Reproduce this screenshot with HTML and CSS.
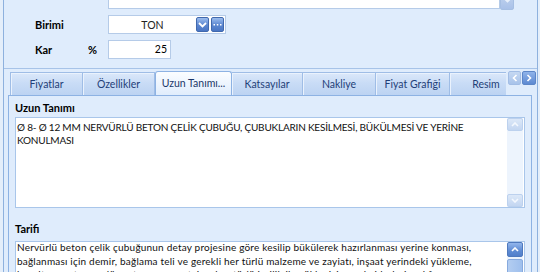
FILE: index.html
```html
<!DOCTYPE html>
<html>

<head>
    <title>Poz Kartı</title>
    <link rel="stylesheet" href="styles.css">
</head>

<body>
    <div class="frame">
        <div class="top">
            <div class="memo-row">
                <div class="memo"></div>
                <span class="btn btn-faded">
                    <svg width="9" height="6" viewBox="0 0 9 6"><path d="M1 1l3.5 3.5L8 1" /></svg>
                </span>
            </div>
            <div class="field">
                <span class="lbl">Birimi</span>
                <div class="combo">
                    <span class="combo-text">TON</span>
                    <span class="btn">
                        <svg width="9" height="6" viewBox="0 0 9 6"><path d="M1 1l3.5 3.5L8 1" /></svg>
                    </span>
                    <span class="btn btn-dots">
                        <svg width="9" height="3" viewBox="0 0 9 3"><rect x="0.5" y="1" width="1.5" height="1.5" /><rect x="3.8" y="1" width="1.5" height="1.5" /><rect x="7" y="1" width="1.5" height="1.5" /></svg>
                    </span>
                </div>
            </div>
            <div class="field">
                <span class="lbl lbl-short">Kar</span>
                <span class="pct">%</span>
                <div class="num">25</div>
            </div>
        </div>

        <div class="tabs-area">
            <div class="tabstrip">
                <div class="tablist">
                    <div class="tab first" style="width:73px">Fiyatlar</div>
                    <div class="tab" style="width:72px">Özellikler</div>
                    <div class="tab active" style="width:77px">Uzun Tanımı...</div>
                    <div class="tab" style="width:71px">Katsayılar</div>
                    <div class="tab" style="width:73px">Nakliye</div>
                    <div class="tab" style="width:74px">Fiyat Grafiği</div>
                    <div class="tab" style="width:73px">Resim</div>
                </div>
                <div class="tab-nav">
                    <span class="nav-btn disabled">
                        <svg width="6" height="8" viewBox="0 0 6 8"><path d="M4.5 1L1.5 4l3 3" /></svg>
                    </span>
                    <span class="nav-btn">
                        <svg width="6" height="8" viewBox="0 0 6 8"><path d="M1.5 1l3 3-3 3" /></svg>
                    </span>
                </div>
            </div>

            <div class="tab-panel">
                <h3>Uzun Tanımı</h3>
                <div class="memo-box tall">
                    <div class="memo-text caps">
                        <div>Ø 8- Ø 12 MM NERVÜRLÜ BETON ÇELİK ÇUBUĞU, ÇUBUKLARIN KESİLMESİ, BÜKÜLMESİ VE YERİNE</div>
                        <div>KONULMASI</div>
                    </div>
                    <div class="vscroll">
                        <span class="sc-btn">
                            <svg width="8" height="5" viewBox="0 0 8 5"><path d="M1 4l3-3 3 3" /></svg>
                        </span>
                        <span class="sc-track"></span>
                        <span class="sc-btn">
                            <svg width="8" height="5" viewBox="0 0 8 5"><path d="M1 1l3 3 3-3" /></svg>
                        </span>
                    </div>
                </div>

                <h3 class="second">Tarifi</h3>
                <div class="memo-box">
                    <div class="memo-text tight">
                        <div>Nervürlü beton çelik çubuğunun detay projesine göre kesilip bükülerek hazırlanması yerine konması,</div>
                        <div>bağlanması için demir, bağlama teli ve gerekli her türlü malzeme ve zayiatı, inşaat yerindeki yükleme,</div>
                        <div>boşaltma, yatay ve düşey taşıma, montaj ve her türlü işçilik ile yüklenici genel giderleri ve kârı</div>
                    </div>
                    <div class="vscroll active">
                        <span class="sc-btn">
                            <svg width="8" height="5" viewBox="0 0 8 5"><path d="M1 4l3-3 3 3" /></svg>
                        </span>
                        <span class="sc-thumb"></span>
                    </div>
                </div>
            </div>
        </div>
    </div>
</body>

</html>
```

FILE: styles.css
```css
* {
    box-sizing: border-box;
    margin: 0;
    padding: 0;
}

body {
    width: 540px;
    height: 272px;
    overflow: hidden;
    background: #e4eefa;
    font-family: Lato, "Liberation Sans", sans-serif;
    font-size: 10px;
    color: #000;
}

.frame {
    margin-left: 3px;
    width: 535px;
    height: 272px;
    overflow: hidden;
    border-left: 1px solid #8eb1de;
    border-right: 1px solid #8eb1de;
    background: #dfecfc;
}

/* top group */

.top {
    display: flow-root;
    height: 69px;
    border-bottom: 1px solid #a7c3e8;
}

.memo-row {
    display: flex;
    align-items: flex-start;
    margin: -10px 0 0 104px;
    height: 20px;
}

.memo {
    width: 392px;
    height: 19px;
    background: #fff;
    border: 1px solid #b5cbe8;
}

.btn {
    display: flex;
    align-items: center;
    justify-content: center;
    width: 13px;
    height: 15px;
    border: 1px solid #4169ae;
    border-radius: 2px;
    background: linear-gradient(#9bbcee, #5b86d0 55%, #4a76c4);
}

.btn svg path {
    fill: none;
    stroke: #fff;
    stroke-width: 1.8;
}

.btn svg rect {
    fill: #fff;
}

.btn-faded {
    width: 14px;
    height: 20px;
    border-color: #a6bfe3;
    background: linear-gradient(#c6d7f0, #a9c1e8);
}

.btn-faded svg path {
    stroke: #e8f0fb;
}

.field {
    display: flex;
    align-items: center;
    height: 19px;
    margin-top: 5px;
    padding-left: 31px;
}

.field + .field {
    margin-top: 6px;
}

.lbl {
    width: 73px;
    font-size: 11px;
    font-weight: bold;
}

.lbl-short {
    width: 53px;
}

.pct {
    width: 20px;
    font-size: 11px;
    font-weight: bold;
}

.combo {
    display: flex;
    align-items: center;
    gap: 1px;
    width: 118px;
    height: 19px;
    padding: 1px;
    background: #fff;
    border: 1px solid #b5cbe8;
}

.combo-text {
    flex: 1;
    text-align: center;
    color: #222;
    font-size: 10.5px;
}

.btn-dots {
    margin-left: 1px;
}

.num {
    width: 63px;
    height: 19px;
    padding-right: 3px;
    line-height: 17px;
    text-align: right;
    font-size: 10.5px;
    background: #fff;
    border: 1px solid #b5cbe8;
}

/* tabs */

.tabs-area {
    padding: 2px 5px 0 4px;
}

.tabstrip {
    display: flex;
    height: 24px;
    padding-left: 2px;
}

.tablist {
    flex: 0 0 496px;
    display: flex;
    align-items: flex-end;
    overflow: hidden;
}

.tab {
    flex: none;
    height: 23px;
    line-height: 22px;
    text-align: center;
    white-space: nowrap;
    font-size: 10.5px;
    color: #1f3f78;
    background: linear-gradient(#dbe8fa, #c9dcf6 45%, #bcd3f2);
    border-top: 1px solid #9fbde6;
    border-right: 1px solid #9fbde6;
    box-shadow: inset 1px 1px 0 #eaf2fd;
}

.tab.first {
    border-left: 1px solid #9fbde6;
}

.tab.active {
    position: relative;
    z-index: 1;
    height: 25px;
    margin-bottom: -1px;
    line-height: 23px;
    color: #1a3768;
    background: linear-gradient(#fbfdff, #eaf3fe 60%, #dfecfc);
    border: 1px solid #8db2e3;
    border-bottom: none;
    border-radius: 3px 3px 0 0;
    box-shadow: none;
}

.tab-nav {
    display: flex;
    gap: 1px;
    margin-left: 2px;
}

.nav-btn {
    display: flex;
    align-items: center;
    justify-content: center;
    width: 13px;
    height: 14px;
    border: 1px solid #5c86c8;
    border-radius: 2px;
    background: linear-gradient(#8fb3ea, #5d89d1);
}

.nav-btn + .nav-btn {
    width: 14px;
}

.nav-btn.disabled {
    border-color: #a2bde5;
    background: linear-gradient(#c5d8f2, #a8c3ea);
}

.nav-btn svg path {
    fill: none;
    stroke: #fff;
    stroke-width: 1.6;
}

.tab-panel {
    height: 200px;
    padding: 5px 6px 0 6px;
    background: #dfecfc;
    border: 1px solid #8db2e3;
    border-bottom: none;
}

.tab-panel h3 {
    height: 13px;
    margin-bottom: 3px;
    line-height: 13px;
    font-size: 11px;
    font-weight: bold;
}

.tab-panel h3.second {
    margin-top: 14px;
    margin-bottom: 6px;
}

.memo-box {
    display: flex;
    height: 60px;
    background: #fff;
    border: 1px solid #a9c6ea;
}

.memo-box.tall {
    height: 91px;
}

.memo-text {
    flex: 1;
    padding: 3px 2px 0 1px;
    line-height: 13px;
    white-space: nowrap;
    overflow: hidden;
    color: #111;
}

.memo-text.caps {
    letter-spacing: -0.2px;
}

.memo-text.tight {
    padding-top: 0;
    margin-top: -1px;
    line-height: 13.5px;
    letter-spacing: 0.2px;
}

/* scrollbars */

.vscroll {
    display: flex;
    flex-direction: column;
    width: 16px;
    margin: 0 1px 0 0;
    background: #edf4fd;
}

.sc-btn {
    display: flex;
    align-items: center;
    justify-content: center;
    height: 13px;
    border: 1px solid #bcd1ee;
    border-radius: 2px;
    background: linear-gradient(#dce8f8, #c3d6f1);
}

.sc-btn svg path {
    fill: none;
    stroke: #f4f8fe;
    stroke-width: 1.6;
}

.sc-track {
    flex: 1;
}

.vscroll.active .sc-btn {
    height: 15px;
    border-color: #4f79bd;
    background: linear-gradient(#92b6ec, #5e8bd3 60%, #527fca);
}

.vscroll.active .sc-btn svg path {
    stroke: #fff;
}

.sc-thumb {
    flex: 1;
    margin-top: 2px;
    border: 1px solid #87aade;
    border-radius: 2px;
    background: linear-gradient(90deg, #b3cdf1, #9ebfed);
}
```
